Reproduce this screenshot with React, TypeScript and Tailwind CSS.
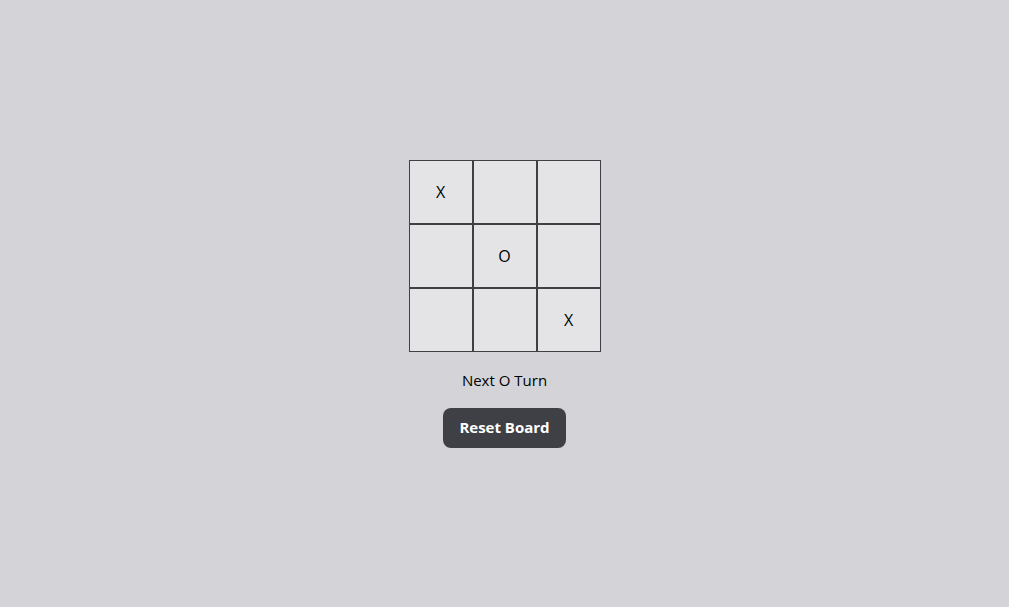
import { useState } from 'react';

type Cell = 'X' | 'O' | null;

export default function App() {
  const [board, setBoard] = useState<Cell[]>(['X', null, null, null, 'O', null, null, null, 'X']);
  const xCount = board.filter((c) => c === 'X').length;
  const oCount = board.filter((c) => c === 'O').length;
  const next = xCount > oCount ? 'O' : 'X';

  const play = (i: number) => {
    if (board[i]) return;
    setBoard(board.map((c, j) => (j === i ? next : c)));
  };

  return (
    <div
      className="min-h-screen bg-[#d4d4d8] flex flex-col items-center justify-center gap-4 text-black"
      style={{ fontFamily: '"Segoe UI", "Open Sans", "Noto Sans", sans-serif' }}
    >
      <div className="grid grid-cols-3">
        {board.map((c, i) => (
          <button
            key={i}
            onClick={() => play(i)}
            className="w-16 h-16 border border-[#3f3f46] bg-[#e4e4e7] flex items-center justify-center text-base text-black"
          >
            {c}
          </button>
        ))}
      </div>
      <p className="text-[15px] leading-6">Next {next} Turn</p>
      <button
        onClick={() => setBoard(Array(9).fill(null))}
        className="h-10 px-4 rounded-lg bg-[#3f3f46] text-white font-bold text-[15px]"
      >
        Reset Board
      </button>
    </div>
  );
}
